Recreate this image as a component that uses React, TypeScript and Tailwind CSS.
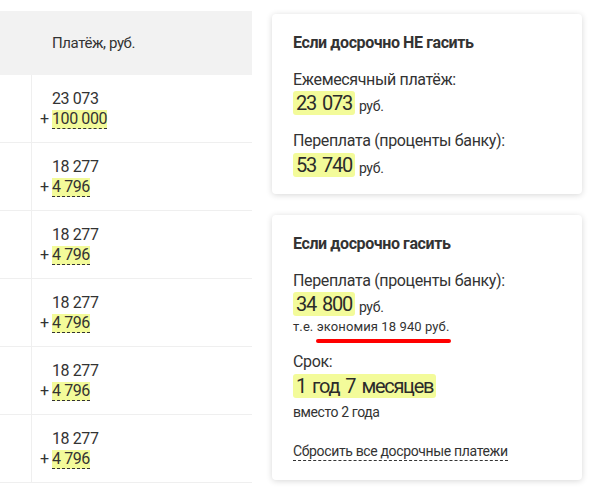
import React from "react";

const rows = [
  { base: "23 073", extra: "100 000" },
  { base: "18 277", extra: "4 796" },
  { base: "18 277", extra: "4 796" },
  { base: "18 277", extra: "4 796" },
  { base: "18 277", extra: "4 796" },
  { base: "18 277", extra: "4 796" },
];

function Hl({ children }: { children: React.ReactNode }) {
  return (
    <span className="inline-block h-[24px] rounded-[3px] bg-[#f3fb9a] px-[3px] text-[20px] leading-[24px] tracking-[-1.3px] [word-spacing:2.5px] text-[#2b2b2b]">
      {children}
    </span>
  );
}

function Amount({ value }: { value: string }) {
  return (
    <div className="flex h-[24px] items-center gap-[4px]">
      <Hl>{value}</Hl>
      <span className="pt-[5px] text-[14px] leading-[18px] tracking-[-0.3px]">руб.</span>
    </div>
  );
}

export default function App() {
  return (
    <div className="flex h-[490px] w-[596px] overflow-hidden bg-white font-['Roboto',sans-serif] text-[#333]">
      {/* table */}
      <div className="w-[252px] shrink-0 pt-[11px]">
        <div className="flex h-[64px] items-center bg-[#f2f2f2]">
          <div className="w-[32px]" />
          <div className="pl-[20px] text-[15px] tracking-[-0.4px] text-[#333]">Платёж, руб.</div>
        </div>
        {rows.map((r, i) => (
          <div key={i} className="flex h-[68px] border-b border-[#efefef]">
            <div className="w-[32px] border-r border-[#efefef]" />
            <div className="pl-[8px] pt-[14px] text-[16px] leading-[20px] tracking-[-0.4px]">
              <div className="pl-[12px]">{r.base}</div>
              <div className="flex items-center">
                <span className="w-[12px]">+</span>
                <span className="border-b border-dashed border-[#333] bg-[#f3fb9a] leading-[18px]">
                  {r.extra}
                </span>
              </div>
            </div>
          </div>
        ))}
      </div>

      {/* cards */}
      <div className="ml-[20px] flex w-[310px] flex-col gap-[21px] pt-[14px]">
        <div className="rounded-[4px] bg-white px-[21px] pb-[17px] pt-[19px] shadow-[0_1px_6px_rgba(0,0,0,0.16)]">
          <div className="text-[16px] font-bold leading-[20px] tracking-[-0.4px] text-[#333]">
            Если досрочно НЕ гасить
          </div>
          <div className="mt-[17px] text-[16px] leading-[20px] tracking-[-0.35px]">Ежемесячный платёж:</div>
          <div className="mt-[1px]">
            <Amount value="23 073" />
          </div>
          <div className="mt-[16px] text-[16px] leading-[20px] tracking-[-0.35px]">Переплата (проценты банку):</div>
          <div className="mt-[2px]">
            <Amount value="53 740" />
          </div>
        </div>

        <div className="rounded-[4px] bg-white px-[21px] pb-[20px] pt-[19px] shadow-[0_1px_6px_rgba(0,0,0,0.16)]">
          <div className="text-[16px] font-bold leading-[20px] tracking-[-0.4px] text-[#333]">
            Если досрочно гасить
          </div>
          <div className="mt-[17px] text-[16px] leading-[20px] tracking-[-0.35px]">Переплата (проценты банку):</div>
          <div className="mt-[1px]">
            <Amount value="34 800" />
          </div>
          <div className="mt-[2px] text-[13px] leading-[18px] tracking-[0.1px]">т.е. экономия 18 940 руб.</div>
          <div className="ml-[23px] mt-[3px] h-[4px] w-[135px] rounded-full bg-[#f00]" />
          <div className="mt-[9px] text-[16px] leading-[20px] tracking-[-0.35px]">Срок:</div>
          <div className="mt-[2px]">
            <Hl>1 год 7 месяцев</Hl>
          </div>
          <div className="mt-[3px] text-[14px] leading-[18px] tracking-[-0.4px]">вместо 2 года</div>
          <div className="mt-[21px] leading-[18px]">
            <span className="border-b border-dashed border-[#333] pb-[1px] text-[14px] leading-[18px] tracking-[-0.35px]">
              Сбросить все досрочные платежи
            </span>
          </div>
        </div>
      </div>
    </div>
  );
}
